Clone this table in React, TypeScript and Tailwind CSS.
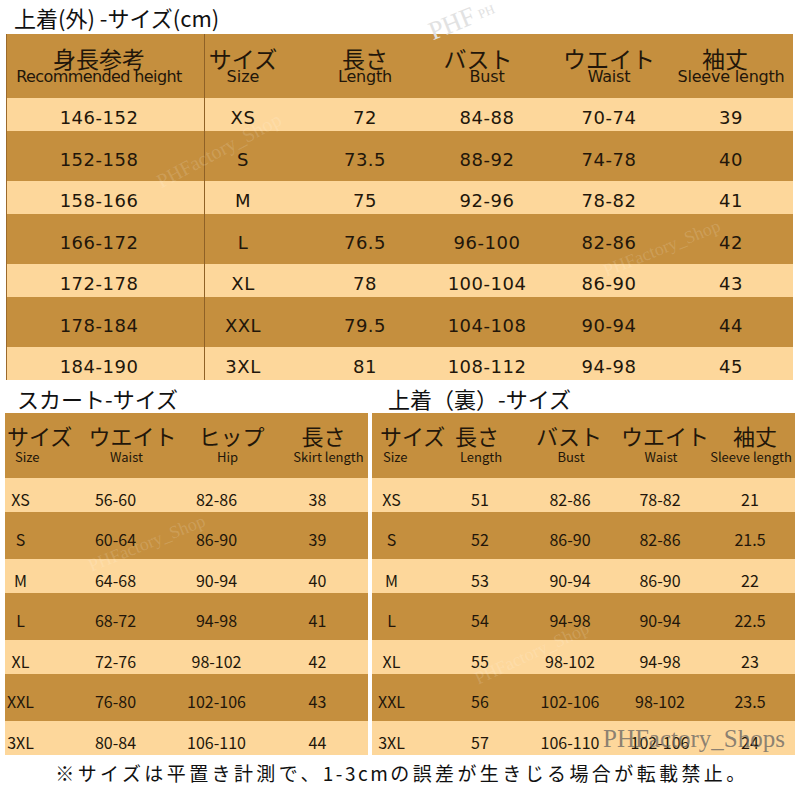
import React from "react";

const DK = "bg-[#c58f3e]";
const LT = "bg-[#fdd79b]";

const topRows = [
  ["146-152", "XS", "72", "84-88", "70-74", "39"],
  ["152-158", "S", "73.5", "88-92", "74-78", "40"],
  ["158-166", "M", "75", "92-96", "78-82", "41"],
  ["166-172", "L", "76.5", "96-100", "82-86", "42"],
  ["172-178", "XL", "78", "100-104", "86-90", "43"],
  ["178-184", "XXL", "79.5", "104-108", "90-94", "44"],
  ["184-190", "3XL", "81", "108-112", "94-98", "45"],
];

const skirtRows = [
  ["XS", "56-60", "82-86", "38"],
  ["S", "60-64", "86-90", "39"],
  ["M", "64-68", "90-94", "40"],
  ["L", "68-72", "94-98", "41"],
  ["XL", "72-76", "98-102", "42"],
  ["XXL", "76-80", "102-106", "43"],
  ["3XL", "80-84", "106-110", "44"],
];

const innerRows = [
  ["XS", "51", "82-86", "78-82", "21"],
  ["S", "52", "86-90", "82-86", "21.5"],
  ["M", "53", "90-94", "86-90", "22"],
  ["L", "54", "94-98", "90-94", "22.5"],
  ["XL", "55", "98-102", "94-98", "23"],
  ["XXL", "56", "102-106", "98-102", "23.5"],
  ["3XL", "57", "106-110", "102-106", "24"],
];

const JP = "font-['Noto_Sans_CJK_JP',sans-serif]";
const DV = "font-['DejaVu_Sans',sans-serif]";

function Mark({ className, text }: { className: string; text: string }) {
  return (
    <div
      className={
        "pointer-events-none absolute whitespace-nowrap font-['Liberation_Serif',serif] " +
        className
      }
    >
      {text}
    </div>
  );
}

export default function App() {
  return (
    <div className="relative h-[800px] w-[800px] overflow-hidden bg-white text-[#22160a]">
      {/* Top title */}
      <div className={`flex h-[34px] items-center pl-[14px] text-[22px] leading-none text-[#111] ${JP}`}>
        上着(外) -サイズ(cm)
      </div>

      {/* Top table */}
      <div className="ml-[6px] w-[787px] border-l border-[#9c6a2b]">
        {/* header */}
        <div className={`flex h-[64px] ${DK}`}>
          <div className="flex w-[198px] flex-col items-center border-r border-[#8f6126] pr-[13px] pt-[11px]">
            <div className={`text-[23px] leading-[26px] ${JP}`}>身長参考</div>
            <div className={`-mt-[2px] whitespace-nowrap text-[16px] leading-[16px] tracking-[-0.6px] ${DV}`}>
              Recommended height
            </div>
          </div>
          <div className="flex w-[76px] flex-col items-center pt-[11px]">
            <div className={`whitespace-nowrap text-[23px] leading-[26px] ${JP}`}>サイズ</div>
            <div className={`-mt-[2px] text-[16px] leading-[16px] ${DV}`}>Size</div>
          </div>
          <div className="ml-[23px] grid grid-cols-[122px_122px_122px_122px]">
            {[
              ["長さ", "Length", ""],
              ["バスト", "Bust", "-translate-x-[9px]"],
              ["ウエイト", "Waist", ""],
              ["袖丈", "Sleeve length", "-translate-x-[6px]"],
            ].map(([j, e, t], i) => (
              <div key={i} className="flex flex-col items-center pt-[11px]">
                <div className={`whitespace-nowrap text-[23px] leading-[26px] ${JP} ${t}`}>{j}</div>
                <div className={`-mt-[2px] whitespace-nowrap text-[16px] leading-[16px] tracking-[-0.2px] ${DV}`}>{e}</div>
              </div>
            ))}
          </div>
        </div>
        {topRows.map((r, i) => (
          <div
            key={i}
            className={`flex items-center pt-[6px] text-[18px] tracking-[0.5px] ${DV} ${
              i % 2 === 0 ? `h-[33px] ${LT}` : `h-[50px] ${DK}`
            }`}
          >
            <div className="-mt-[6px] flex h-[calc(100%+6px)] w-[198px] items-center justify-center border-r border-[#8f6126] pr-[13px] pt-[6px]">
              {r[0]}
            </div>
            <div className="flex w-[76px] justify-center whitespace-nowrap">{r[1]}</div>
            <div className="ml-[23px] grid grid-cols-[122px_122px_122px_122px]">
              {r.slice(2).map((c, k) => (
                <div key={k} className="flex justify-center whitespace-nowrap">
                  {c}
                </div>
              ))}
            </div>
          </div>
        ))}
      </div>

      {/* Bottom area */}
      <div className="flex gap-[4px] pl-[5px]">
        {/* Skirt */}
        <div className="w-[363px]">
          <div className={`flex h-[33px] items-center pl-[12px] pt-[2px] text-[22px] leading-none text-[#111] ${JP}`}>
            スカート-サイズ
          </div>
          <div className={`flex h-[65px] ${DK} ${JP}`}>
            <div className="flex w-[42px] flex-col pt-[9px]">
              <div className="whitespace-nowrap pl-[2px] text-[22px] leading-[26px]">サイズ</div>
              <div className="mt-[1px] pl-[10px] text-[13px] leading-[16px]">Size</div>
            </div>
            <div className="ml-[29px] grid grid-cols-[101px_101px_101px]">
              {[
                ["ウエイト", "Waist", "translate-x-[6px]"],
                ["ヒップ", "Hip", "translate-x-[4px]"],
                ["長さ", "Skirt length", "-translate-x-[5px]"],
              ].map(([j, e, t], i) => (
                <div key={i} className="flex flex-col items-center pt-[9px]">
                  <div className={`whitespace-nowrap text-[22px] leading-[26px] ${t}`}>{j}</div>
                  <div className="mt-[1px] whitespace-nowrap text-[13px] leading-[16px]">{e}</div>
                </div>
              ))}
            </div>
          </div>
          {skirtRows.map((r, i) => (
            <div
              key={i}
              className={`flex items-center pt-[7px] text-[16px] ${JP} ${
                i % 2 === 0 ? `h-[34px] ${LT}` : `h-[47px] ${DK}`
              }`}
            >
              <div className="flex w-[42px] justify-center whitespace-nowrap">{r[0]}</div>
              <div className="ml-[29px] grid grid-cols-[101px_101px_101px]">
                {r.slice(1).map((c, k) => (
                  <div key={k} className="flex justify-center whitespace-nowrap">
                    {c}
                  </div>
                ))}
              </div>
            </div>
          ))}
        </div>

        {/* Inner jacket */}
        <div className="w-[423px]">
          <div className={`flex h-[33px] items-center pl-[16px] pt-[2px] text-[22px] leading-none text-[#111] ${JP}`}>
            上着（裏）-サイズ
          </div>
          <div className={`flex h-[65px] ${DK} ${JP}`}>
            <div className="flex w-[40px] flex-col pt-[9px]">
              <div className="whitespace-nowrap pl-[8px] text-[22px] leading-[26px]">サイズ</div>
              <div className="mt-[1px] pl-[11px] text-[13px] leading-[16px]">Size</div>
            </div>
            <div className="ml-[24px] grid grid-cols-[90px_90px_90px_90px]">
              {[
                ["長さ", "Length", "-translate-x-[4px]"],
                ["バスト", "Bust", "-translate-x-[2px]"],
                ["ウエイト", "Waist", "translate-x-[4px]"],
                ["袖丈", "Sleeve length", "translate-x-[4px]"],
              ].map(([j, e, t], i) => (
                <div key={i} className="flex flex-col items-center pt-[9px]">
                  <div className={`whitespace-nowrap text-[22px] leading-[26px] ${t}`}>{j}</div>
                  <div className="mt-[1px] whitespace-nowrap text-[13px] leading-[16px]">{e}</div>
                </div>
              ))}
            </div>
          </div>
          {innerRows.map((r, i) => (
            <div
              key={i}
              className={`relative flex items-center pt-[7px] text-[16px] ${JP} ${
                i % 2 === 0 ? `h-[34px] ${LT}` : `h-[47px] ${DK}`
              }`}
            >
              <div className="flex w-[40px] justify-center whitespace-nowrap">{r[0]}</div>
              <div className="ml-[24px] grid grid-cols-[90px_90px_90px_90px]">
                {r.slice(1).map((c, k) => (
                  <div key={k} className="flex justify-center whitespace-nowrap">
                    {c}
                  </div>
                ))}
              </div>
              {i === 6 && (
                <Mark
                  className="left-[231px] top-[2px] text-[25px] leading-[32px] text-[#6e6a66]/80"
                  text="PHFactory_Shops"
                />
              )}
            </div>
          ))}
        </div>
      </div>

      {/* Footer */}
      <div className={`flex justify-center pl-[4px] pt-[4px] text-[19px] leading-[28px] tracking-[3.4px] text-[#111] ${JP}`}>
        ※サイズは平置き計測で、<span className="tracking-[2.5px]">1-3cm</span>の誤差が生きじる場合が転載禁止。
      </div>

      {/* faint watermarks */}
      <Mark className="left-[428px] top-[4px] -rotate-[22deg] text-[26px] text-[#e2e2e2]" text="PHF" />
      <Mark className="left-[478px] top-[2px] -rotate-[22deg] text-[13px] text-[#e2e2e2]" text="PH" />
      <Mark className="left-[150px] top-[135px] -rotate-[28deg] text-[20px] text-white/15" text="PHFactory_Shop" />
      <Mark className="left-[600px] top-[235px] -rotate-[22deg] text-[18px] text-white/15" text="PHFactory_Shop" />
      <Mark className="left-[85px] top-[530px] -rotate-[22deg] text-[18px] text-white/15" text="PHFactory_Shop" />
      <Mark className="left-[470px] top-[640px] -rotate-[25deg] text-[18px] text-white/15" text="PHFactory_Shop" />
    </div>
  );
}
